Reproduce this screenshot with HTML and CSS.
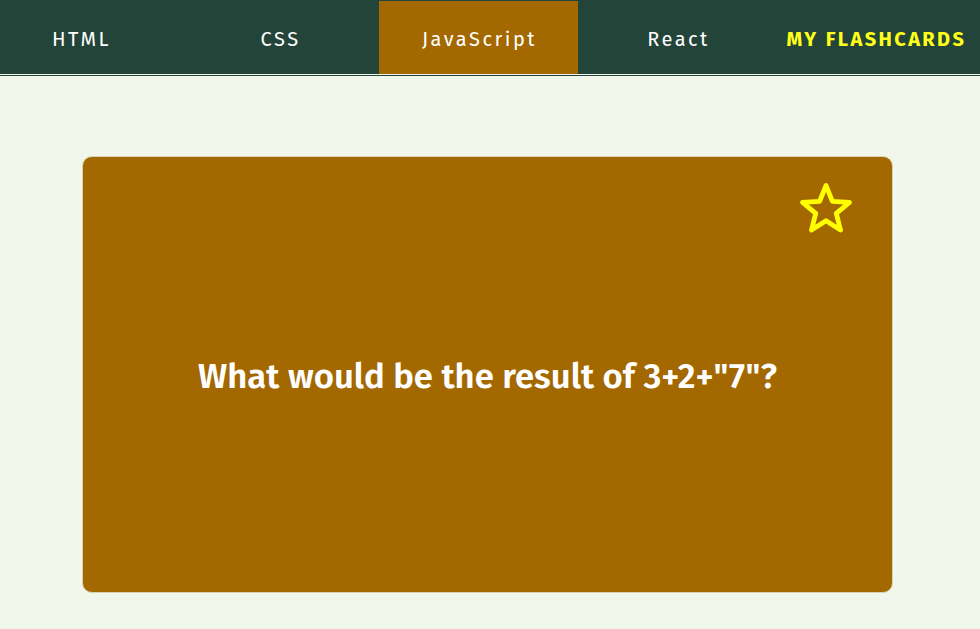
FILE: index.html
```html
<!DOCTYPE html>
<html lang="en">
<head>
<meta charset="utf-8">
<title>My Flashcards</title>
<link rel="stylesheet" href="styles.css">
</head>
<body>
<nav class="nav">
  <ul class="nav-list">
    <li class="nav-item">HTML</li>
    <li class="nav-item">CSS</li>
    <li class="nav-item nav-item-active">JavaScript</li>
    <li class="nav-item">React</li>
    <li class="nav-item nav-brand">MY FLASHCARDS</li>
  </ul>
</nav>
<main class="main">
  <section class="card">
    <button class="star" aria-label="Favourite">
      <svg width="56" height="54" viewBox="0 0 56 54">
        <polygon points="28,3.5 34.4,19.3 51.5,20.4 38.3,31.3 42.5,48 28,38.8 13.5,48 17.7,31.3 4.5,20.4 21.6,19.3" fill="none" stroke="#ffff00" stroke-width="4.8" stroke-linejoin="round"/>
      </svg>
    </button>
    <h1 class="question">What would be the result of 3+2+"7"?</h1>
  </section>
</main>
</body>
</html>
```
FILE: styles.css
```css
* { box-sizing: border-box; }
html, body { margin: 0; padding: 0; }
body {
  background: #f1f7ea;
  font-family: "Fira Sans", "Open Sans", "Noto Sans", sans-serif;
  overflow: hidden;
}
.nav {
  background: #234539;
  height: 74px;
  padding-top: 1px;
  box-shadow: 0 1px 0 #f1f7ea, 0 2px 0 #234539;
  overflow: hidden;
}
.nav-list {
  list-style: none;
  margin: 0 0 0 -19px;
  padding: 0;
  display: flex;
  height: 100%;
}
.nav-item {
  flex: 0 0 199px;
  display: flex;
  align-items: center;
  justify-content: center;
  color: #ffffff;
  font-size: 20px;
  letter-spacing: 2.5px;
  padding-left: 2px;
  padding-top: 2px;
}
.nav-item-active {
  background: #a36800;
}
.nav-brand {
  color: #ffff1a;
  font-weight: 700;
  letter-spacing: 2.4px;
  padding-left: 0;
}
.main {
  padding: 82px 88px 0 82px;
}
.card {
  position: relative;
  width: 811px;
  height: 437px;
  background: #a36800;
  border: 1px solid #d8d3b0;
  border-radius: 10px;
  display: flex;
  align-items: center;
  justify-content: center;
}
.star {
  position: absolute;
  top: 25px;
  right: 38px;
  background: none;
  border: 0;
  padding: 0;
  line-height: 0;
}
.question {
  margin: 4px 0 0 0;
  color: #ffffff;
  font-size: 34.7px;
  font-weight: 600;
  letter-spacing: 0;
}
```
